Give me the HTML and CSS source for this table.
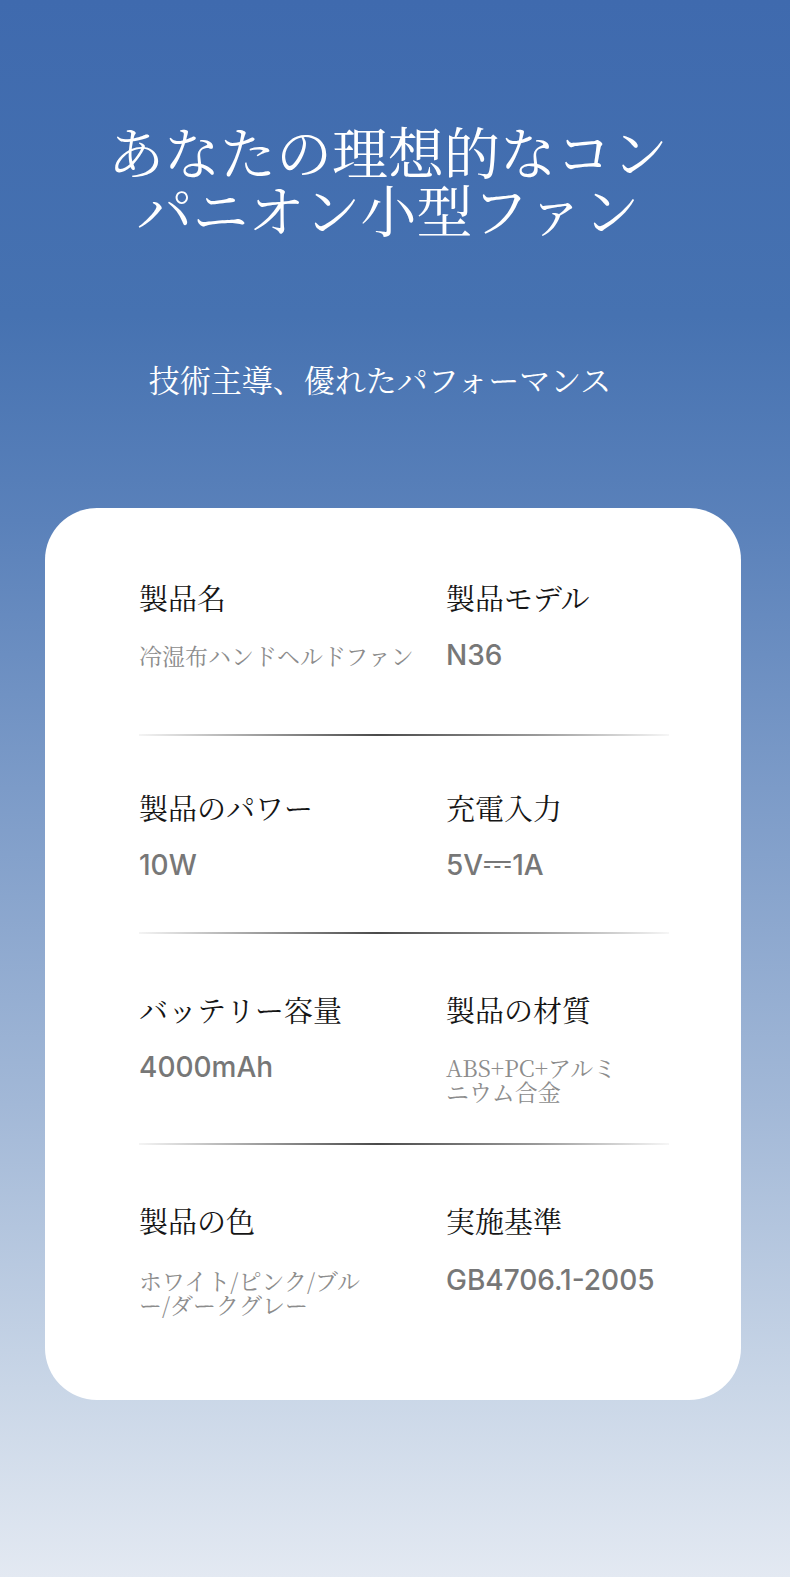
FILE: index.html
```html
<!DOCTYPE html>
<html lang="ja">

<head>
  <meta charset="UTF-8">
  <meta name="viewport" content="width=device-width, initial-scale=1.0">
  <title>小型ファン 製品仕様</title>
  <link rel="stylesheet" href="styles.css">
</head>

<body>
  <header class="hero">
    <!-- Main headline -->
    <h1 class="hero-title">あなたの理想的なコン<br>パニオン小型ファン</h1>
    <p class="hero-sub">技術主導、優れたパフォーマンス</p>
  </header>

  <!-- Spec card -->
  <section class="spec-card">
    <div class="spec-row">
      <div class="spec-item">
        <h3 class="spec-label">製品名</h3>
        <p class="spec-value spec-text">冷湿布ハンドヘルドファン</p>
      </div>
      <div class="spec-item">
        <h3 class="spec-label">製品モデル</h3>
        <p class="spec-value">N36</p>
      </div>
    </div>

    <div class="spec-row">
      <div class="spec-item">
        <h3 class="spec-label">製品のパワー</h3>
        <p class="spec-value">10W</p>
      </div>
      <div class="spec-item">
        <h3 class="spec-label">充電入力</h3>
        <p class="spec-value">5V<span class="dc">⎓</span>1A</p>
      </div>
    </div>

    <div class="spec-row">
      <div class="spec-item">
        <h3 class="spec-label">バッテリー容量</h3>
        <p class="spec-value">4000mAh</p>
      </div>
      <div class="spec-item">
        <h3 class="spec-label">製品の材質</h3>
        <p class="spec-value spec-text">ABS+PC+アルミ<br>ニウム合金</p>
      </div>
    </div>

    <div class="spec-row">
      <div class="spec-item">
        <h3 class="spec-label">製品の色</h3>
        <p class="spec-value spec-text">ホワイト/ピンク/ブル<br>ー/ダークグレー</p>
      </div>
      <div class="spec-item">
        <h3 class="spec-label">実施基準</h3>
        <p class="spec-value">GB4706.1-2005</p>
      </div>
    </div>
  </section>
</body>

</html>
```

FILE: styles.css
```css
body {
  margin: 0;
  padding: 0;
  min-height: 1577px;
  background: linear-gradient(180deg, #3f6aae 0%, #4672b1 20%, #5a81ba 33%, #7c9bc8 50%, #a2b8d7 70%, #c9d6e7 88%, #e3e9f2 100%);
  font-family: "Noto Serif CJK JP", "Noto Sans CJK JP", serif;
  color: #1a1a1a;
}

.hero {
  padding-top: 121px;
  text-align: center;
  color: white;
}

.hero-title {
  margin: 0;
  padding-right: 14px;
  font-size: 56px;
  line-height: 58px;
  font-weight: 400;
}

.hero-sub {
  margin: 122px 0 0;
  padding-right: 30px;
  font-size: 31px;
  line-height: 40px;
  font-weight: 400;
}

.spec-card {
  margin: 109px 49px 0 45px;
  padding: 0 72px 83px 94px;
  background-color: white;
  border-radius: 52px;
}

.spec-row {
  display: grid;
  grid-template-columns: 307px 1fr;
  padding: 52px 0 50px;
}

.spec-row:nth-child(1) {
  padding-top: 70px;
  padding-bottom: 62px;
}

.spec-row:nth-child(3) {
  padding-top: 56px;
  padding-bottom: 39px;
}

.spec-row:nth-child(4) {
  padding-top: 56px;
  padding-bottom: 0;
}

.spec-row:nth-child(4) .spec-value {
  margin-top: 22px;
}

/* gradient divider between rows */
.spec-row + .spec-row {
  border-top: 2px solid transparent;
  border-image: linear-gradient(90deg, rgba(0, 0, 0, 0.04), #4a4a4a 45%, #9a9a9a 75%, rgba(0, 0, 0, 0.03)) 1;
}

.spec-label {
  margin: 0;
  font-size: 29px;
  line-height: 40px;
  font-weight: 400;
  color: #151515;
}

.spec-value {
  margin: 20px 0 0;
  font-family: Inter, "Noto Sans CJK JP", sans-serif;
  font-size: 28px;
  line-height: 34px;
  font-weight: 500;
  color: #777;
}

.spec-text {
  padding-top: 6px;
  font-family: "Noto Serif CJK JP", "Noto Sans CJK JP", serif;
  font-size: 23px;
  line-height: 24px;
  font-weight: 400;
  color: #8c8c8c;
}

.dc {
  font-family: "DejaVu Sans", sans-serif;
  font-size: 36px;
  line-height: 0;
}
```
